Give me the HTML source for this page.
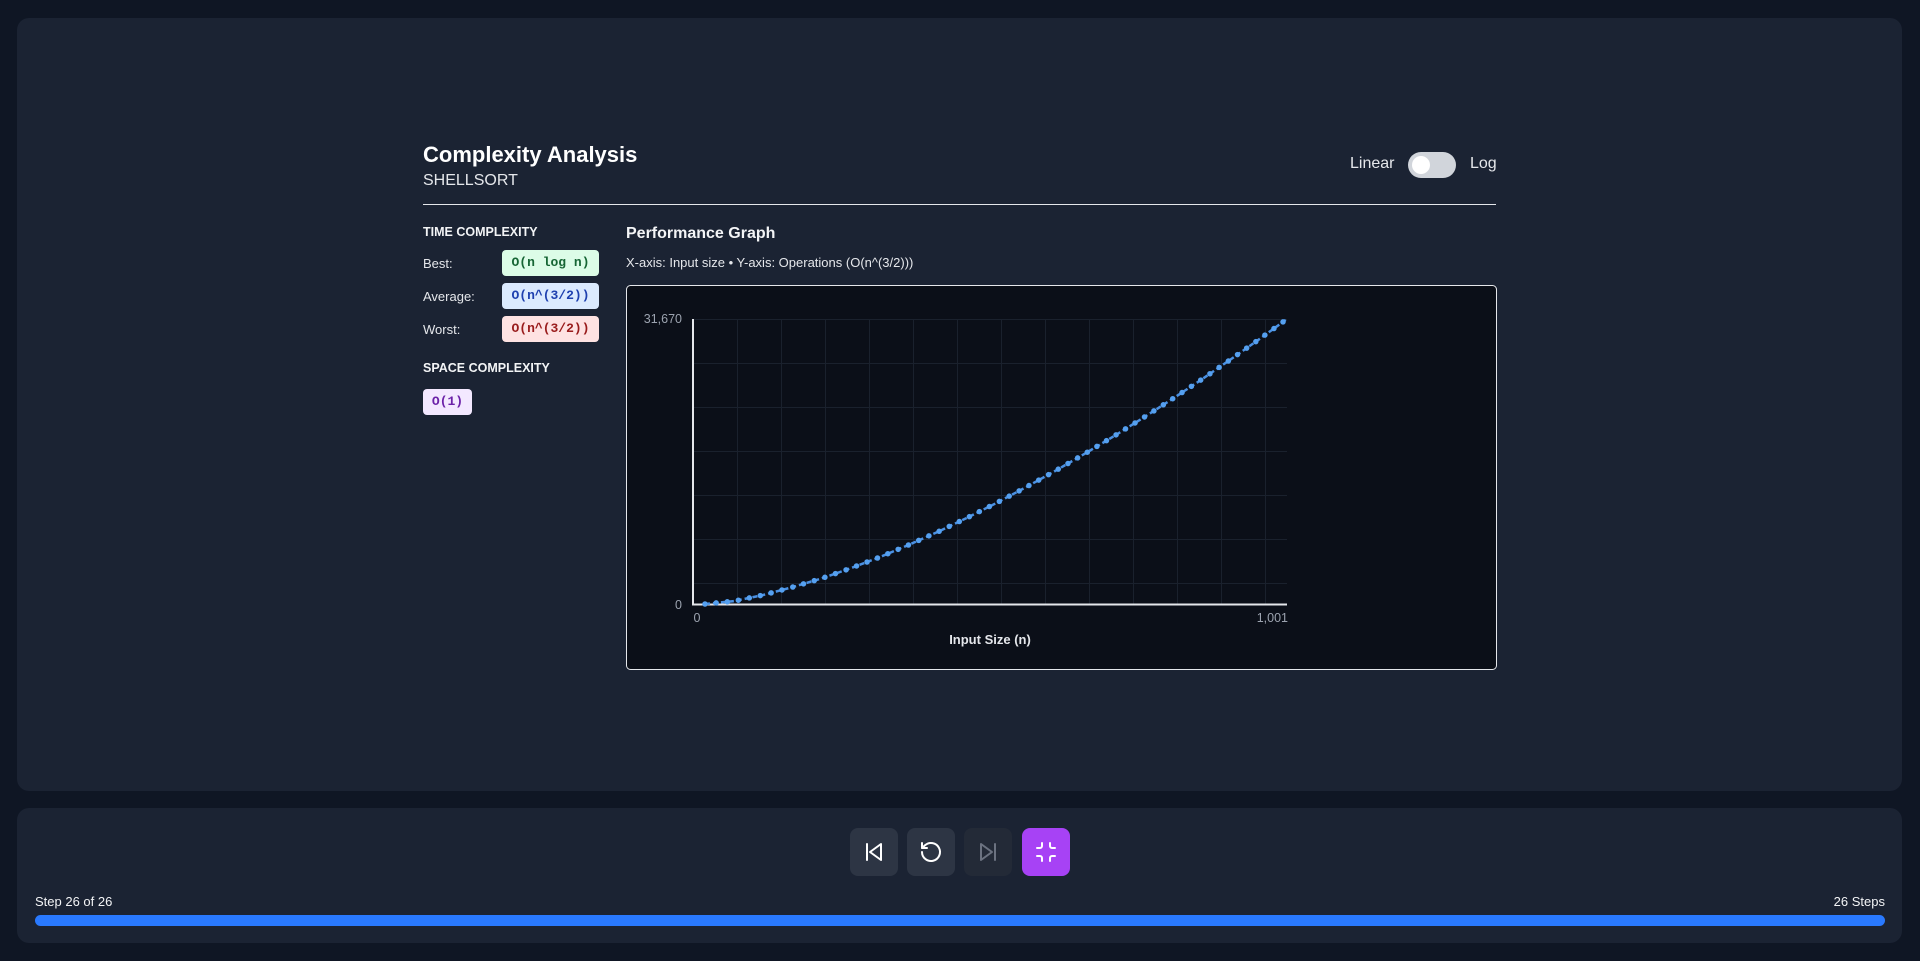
<!DOCTYPE html>
<html><head><meta charset="utf-8"><style>
*{box-sizing:border-box;margin:0;padding:0}
body{width:1920px;height:961px;background:#0f1624;font-family:"Liberation Sans",sans-serif;color:#e5e7eb;position:relative;overflow:hidden}
.panel{position:absolute;background:#1b2333;border-radius:12px}
.abs{position:absolute;white-space:nowrap}
.badge{position:absolute;height:26px;border-radius:4px;font-family:"Liberation Mono",monospace;font-weight:bold;font-size:13px;line-height:26px;text-align:center}
.btn{position:absolute;top:828px;width:48px;height:48px;border-radius:8px;background:#2d3544;display:flex;align-items:center;justify-content:center}
</style></head><body>
<div class="panel" style="left:17px;top:18px;width:1885px;height:773px"></div>
<div class="panel" style="left:17px;top:808px;width:1885px;height:135px"></div>

<div class="abs" style="left:423px;top:142px;font-size:22px;font-weight:bold;color:#fff">Complexity Analysis</div>
<div class="abs" style="left:423px;top:172px;font-size:16px;color:#e5e7eb">SHELLSORT</div>
<div class="abs" style="left:1350px;top:155px;font-size:16px;color:#e5e7eb">Linear</div>
<div class="abs" style="left:1408px;top:152px;width:48px;height:26px;border-radius:13px;background:#d1d5db"><div style="position:absolute;left:4px;top:4px;width:18px;height:18px;border-radius:50%;background:#fff"></div></div>
<div class="abs" style="left:1470px;top:155px;font-size:16px;color:#e5e7eb">Log</div>
<div class="abs" style="left:423px;top:204px;width:1073px;height:1px;background:#e5e7eb"></div>

<div class="abs" style="left:423px;top:225px;font-size:12.5px;font-weight:bold;color:#f3f4f6">TIME COMPLEXITY</div>
<div class="abs" style="left:423px;top:256px;font-size:13px">Best:</div>
<div class="badge" style="left:502px;top:250px;width:97px;background:#dcfce7;color:#166534">O(n log n)</div>
<div class="abs" style="left:423px;top:289px;font-size:13px">Average:</div>
<div class="badge" style="left:502px;top:283px;width:97px;background:#dbeafe;color:#1e40af">O(n^(3/2))</div>
<div class="abs" style="left:423px;top:322px;font-size:13px">Worst:</div>
<div class="badge" style="left:502px;top:316px;width:97px;background:#fee2e2;color:#991b1b">O(n^(3/2))</div>
<div class="abs" style="left:423px;top:361px;font-size:12.5px;font-weight:bold;color:#f3f4f6">SPACE COMPLEXITY</div>
<div class="badge" style="left:423px;top:389px;width:49px;background:#f3e8ff;color:#6b21a8">O(1)</div>

<div class="abs" style="left:626px;top:225px;font-size:16px;font-weight:bold;color:#f3f4f6">Performance Graph</div>
<div class="abs" style="left:626px;top:255px;font-size:13px;color:#e5e7eb">X-axis: Input size • Y-axis: Operations (O(n^(3/2)))</div>

<svg class="abs" style="left:0;top:0" width="1920" height="961">
<rect x="626.5" y="285.5" width="870" height="384" rx="4" fill="#0b0f18" stroke="#e5e7eb" stroke-width="1"/>
<g stroke="#1a212d" stroke-width="1">
<line x1="737.5" y1="319" x2="737.5" y2="604"/><line x1="781.5" y1="319" x2="781.5" y2="604"/><line x1="825.5" y1="319" x2="825.5" y2="604"/><line x1="869.5" y1="319" x2="869.5" y2="604"/><line x1="913.5" y1="319" x2="913.5" y2="604"/><line x1="957.5" y1="319" x2="957.5" y2="604"/><line x1="1001.5" y1="319" x2="1001.5" y2="604"/><line x1="1045.5" y1="319" x2="1045.5" y2="604"/><line x1="1089.5" y1="319" x2="1089.5" y2="604"/><line x1="1133.5" y1="319" x2="1133.5" y2="604"/><line x1="1177.5" y1="319" x2="1177.5" y2="604"/><line x1="1221.5" y1="319" x2="1221.5" y2="604"/><line x1="1265.5" y1="319" x2="1265.5" y2="604"/>
<line x1="693" y1="319.5" x2="1287" y2="319.5"/><line x1="693" y1="363.5" x2="1287" y2="363.5"/><line x1="693" y1="407.5" x2="1287" y2="407.5"/><line x1="693" y1="451.5" x2="1287" y2="451.5"/><line x1="693" y1="495.5" x2="1287" y2="495.5"/><line x1="693" y1="539.5" x2="1287" y2="539.5"/><line x1="693" y1="583.5" x2="1287" y2="583.5"/>
</g>
<line x1="693" y1="319" x2="693" y2="605" stroke="#e5e7eb" stroke-width="2"/>
<line x1="692" y1="604.5" x2="1287" y2="604.5" stroke="#e5e7eb" stroke-width="2"/>
<polyline points="705,604 734.1,601.1 763.2,595 792.3,587.2 821.4,578.5 850.5,568.3 879.6,557.2 908.7,544.9 937.8,531.9 966.9,517.9 996,503.2 1025.1,487.7 1054.2,471.5 1083.3,454.6 1112.4,437.1 1141.5,418.9 1170.6,400.1 1199.7,380.8 1228.8,360.7 1257.9,340.2 1287,319" fill="none" stroke="#4a90e2" stroke-width="2.5" stroke-dasharray="5 3"/>
<polyline points="705,604 734.1,601.1 763.2,595 792.3,587.2 821.4,578.5 850.5,568.3 879.6,557.2 908.7,544.9 937.8,531.9 966.9,517.9 996,503.2 1025.1,487.7 1054.2,471.5 1083.3,454.6 1112.4,437.1 1141.5,418.9 1170.6,400.1 1199.7,380.8 1228.8,360.7 1257.9,340.2 1287,319" fill="none" stroke="#55a0f0" stroke-width="5.5" stroke-linecap="round" stroke-dasharray="0 11.2"/>
<g font-family="Liberation Sans, sans-serif" font-size="12.5" fill="#9ca3af">
<text x="682" y="323" text-anchor="end">31,670</text>
<text x="682" y="609" text-anchor="end">0</text>
<text x="697" y="622" text-anchor="middle">0</text>
<text x="1288" y="622" text-anchor="end">1,001</text>
</g>
<text x="990" y="644" text-anchor="middle" font-family="Liberation Sans, sans-serif" font-size="13" font-weight="bold" fill="#e5e7eb">Input Size (n)</text>
</svg>

<div class="btn" style="left:850px"><svg width="24" height="24" viewBox="0 0 24 24" fill="none" stroke="#fff" stroke-width="2" stroke-linecap="round" stroke-linejoin="round"><line x1="5" y1="4" x2="5" y2="20"/><path d="M19 4 L8 12 L19 20 Z"/></svg></div>
<div class="btn" style="left:907px"><svg width="24" height="24" viewBox="0 0 24 24" fill="none" stroke="#fff" stroke-width="2" stroke-linecap="round" stroke-linejoin="round"><path d="M3 12a9 9 0 1 0 3-6.7L3 8"/><path d="M3 3v5h5"/></svg></div>
<div class="btn" style="left:964px;background:#232a37"><svg width="24" height="24" viewBox="0 0 24 24" fill="none" stroke="#6b7280" stroke-width="2" stroke-linecap="round" stroke-linejoin="round"><line x1="19" y1="4" x2="19" y2="20"/><path d="M5 4 L16 12 L5 20 Z"/></svg></div>
<div class="btn" style="left:1022px;background:#a742f5"><svg width="24" height="24" viewBox="0 0 24 24" fill="none" stroke="#fff" stroke-width="2" stroke-linecap="round" stroke-linejoin="round"><path d="M8 3v3a2 2 0 0 1-2 2H3"/><path d="M21 8h-3a2 2 0 0 1-2-2V3"/><path d="M3 16h3a2 2 0 0 1 2 2v3"/><path d="M16 21v-3a2 2 0 0 1 2-2h3"/></svg></div>

<div class="abs" style="left:35px;top:894px;font-size:13px;color:#f3f4f6">Step 26 of 26</div>
<div class="abs" style="right:35px;top:894px;font-size:13px;color:#f3f4f6">26 Steps</div>
<div class="abs" style="left:35px;top:915px;width:1850px;height:11px;border-radius:6px;background:#2979ff"></div>
</body></html>
